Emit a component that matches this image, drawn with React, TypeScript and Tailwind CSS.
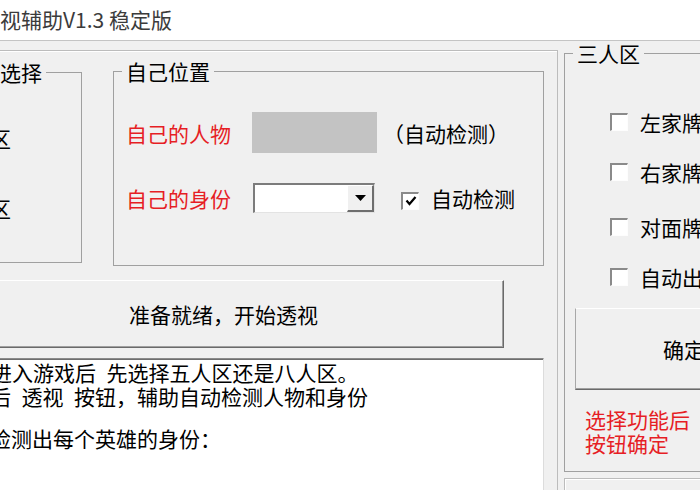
import React from "react";

function CheckBox({ checked }: { checked?: boolean }) {
  return (
    <span className="inline-flex h-[18px] w-[18px] shrink-0 items-center justify-center border-b border-l-2 border-r border-t-2 border-b-[#fdfdfd] border-l-[#8a8a8a] border-r-[#fdfdfd] border-t-[#8a8a8a] bg-white">
      {checked && (
        <svg width="12" height="12" viewBox="0 0 12 12">
          <path d="M1.5 5.5 L4.5 9 L10.5 2" fill="none" stroke="#000" strokeWidth="2.2" />
        </svg>
      )}
    </span>
  );
}

function CheckRow({ label, className }: { label: string; className: string }) {
  return (
    <div className={"flex h-[24px] items-center whitespace-nowrap " + className}>
      <CheckBox />
      <span className="ml-[12px]">{label}</span>
    </div>
  );
}

export default function App() {
  return (
    <div className="h-[490px] w-[700px] overflow-hidden bg-[#f0f0f0] font-['Noto_Sans_CJK_SC','Noto_Sans',sans-serif] text-[21px] leading-[24px] text-black">
      {/* title bar */}
      <div className="h-[41px] border-b border-[#c4c4c4] bg-white">
        <div className="-ml-[21px] whitespace-nowrap pt-[6px] text-[21px] leading-[26px] text-[#3b3b3b]">
          透视辅助V1.3 稳定版
        </div>
      </div>

      <div className="flex items-start">
        {/* left panel */}
        <div className="-ml-[71px] mt-[9px] h-[460px] w-[629px] shrink-0 border border-[#bcbcbc] px-[13px] pt-[9px] shadow-[inset_1px_1px_0_#ffffff]">
          <div className="flex items-start gap-[31px]">
            <fieldset className="mt-[1px] h-[202px] w-[139px] shrink-0 border border-[#a0a0a0] pl-[10px]">
              <legend className="whitespace-nowrap px-[4px] leading-[23px]">模式选择</legend>
              <div className="-ml-[6px] mt-[42px] whitespace-nowrap">五人区</div>
              <div className="-ml-[6px] mt-[46px] whitespace-nowrap">八人区</div>
            </fieldset>

            <fieldset className="h-[206px] w-[431px] shrink-0 border border-[#a0a0a0] pl-[8px]">
              <legend className="whitespace-nowrap px-[4px] leading-[23px]">自己位置</legend>
              <div className="ml-[4px] mt-[29px] flex h-[41px] items-center">
                <span className="w-[126px] whitespace-nowrap text-[#e61e25]">自己的人物</span>
                <div className="h-[41px] w-[125px] bg-[#c3c3c3]" />
                <span className="ml-[6px] whitespace-nowrap">（自动检测）</span>
              </div>
              <div className="ml-[4px] mt-[30px] flex h-[30px] items-center">
                <span className="w-[127px] whitespace-nowrap text-[#e61e25]">自己的身份</span>
                <div className="flex h-[30px] w-[122px] border-b border-l-2 border-r border-t-2 border-b-[#e3e3e3] border-l-[#7c7c7c] border-r-[#e3e3e3] border-t-[#7c7c7c] bg-white">
                  <div className="flex-1" />
                  <div className="flex w-[27px] items-center justify-center border-b-2 border-l border-r-2 border-t border-b-[#6e6e6e] border-l-white border-r-[#6e6e6e] border-t-white bg-[#f0f0f0]">
                    <svg width="11" height="6" viewBox="0 0 11 6">
                      <path d="M0 0 H11 L5.5 6 Z" fill="#000" />
                    </svg>
                  </div>
                </div>
                <span className="ml-[26px]">
                  <CheckBox checked />
                </span>
                <span className="ml-[12px] whitespace-nowrap">自动检测</span>
              </div>
            </fieldset>
          </div>

          <button className="mt-[14px] flex h-[68px] w-[561px] items-center justify-center border-b border-l border-r border-t border-b-[#6a6a6a] border-l-white border-r-[#6a6a6a] border-t-white bg-[#f0f0f0] shadow-[inset_-1px_-1px_0_#a0a0a0]">
            准备就绪，开始透视
          </button>

          <div className="mt-[10px] h-[150px] w-[601px] border-b border-l border-r border-t border-b-white border-l-[#a0a0a0] border-r-[#dcdcdc] border-t-[#8a8a8a] bg-white pt-[1px] shadow-[inset_1px_1px_0_#6e6e6e]">
            <div className="ml-[47px] whitespace-nowrap">进入游戏后&#8194;先选择五人区还是八人区。</div>
            <div className="ml-[46px] whitespace-nowrap">后&#8194;透视&#8194;按钮，辅助自动检测人物和身份</div>
            <div className="ml-[46px] mt-[18px] whitespace-nowrap">检测出每个英雄的身份：</div>
          </div>
        </div>

        {/* right column */}
        <div className="ml-[6px] mt-[1px] flex shrink-0 flex-col">
          <fieldset className="h-[430px] w-[240px] border border-[#a0a0a0] pl-[8px]">
            <legend className="whitespace-nowrap px-[4px] leading-[23px]">三人区</legend>
            <CheckRow label="左家牌透视" className="ml-[37px] mt-[45px]" />
            <CheckRow label="右家牌透视" className="ml-[37px] mt-[26px]" />
            <CheckRow label="对面牌透视" className="ml-[37px] mt-[31px]" />
            <CheckRow label="自动出牌" className="ml-[37px] mt-[26px]" />
            <button className="ml-[2px] mt-[19px] flex h-[82px] w-[218px] items-center justify-center border-b border-l border-r border-t border-b-[#6a6a6a] border-l-[#a8a8a8] border-r-[#6a6a6a] border-t-white bg-[#f0f0f0] shadow-[inset_-1px_-1px_0_#a0a0a0]">
              确定
            </button>
            <div className="ml-[12px] mt-[17px] text-[#e61e25]">
              <div className="whitespace-nowrap">选择功能后</div>
              <div className="whitespace-nowrap">按钮确定</div>
            </div>
          </fieldset>
          <div className="mt-[6px] h-[60px] w-[240px] border border-[#bcbcbc] shadow-[inset_1px_1px_0_#ffffff]" />
        </div>
      </div>
    </div>
  );
}
